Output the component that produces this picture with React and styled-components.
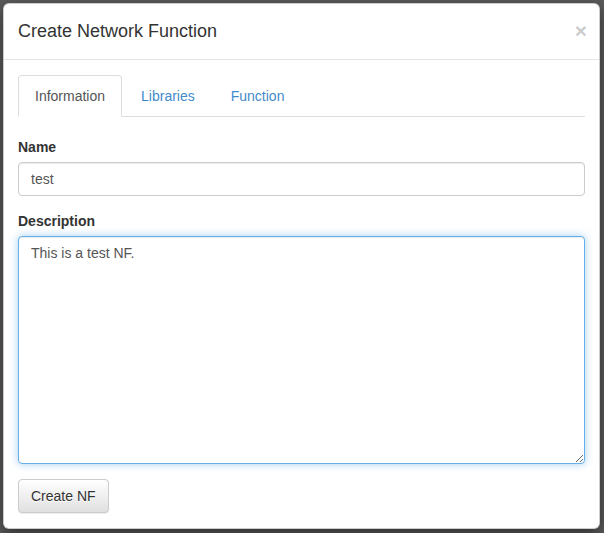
import React, { useEffect, useRef, useState } from 'react';
import styled, { createGlobalStyle, css } from 'styled-components';

const GlobalStyle = createGlobalStyle`
  html, body {
    margin: 0;
    padding: 0;
    background: #5b5b5b;
  }
  body {
    font-family: 'Liberation Sans', Arial, Helvetica, sans-serif;
    font-size: 14px;
    line-height: 1.42857;
    color: #333;
  }
  * {
    box-sizing: border-box;
  }
`;

const Backdrop = styled.div`
  width: 604px;
  height: 533px;
  padding: 3px;
  background: #5b5b5b;
  overflow: hidden;
`;

const Modal = styled.div`
  width: 597px;
  background: #fff;
  border: 1px solid rgba(0, 0, 0, 0.2);
  border-radius: 6px;
  box-shadow: 0 5px 15px rgba(0, 0, 0, 0.5);
`;

const Header = styled.div`
  display: flex;
  align-items: center;
  justify-content: space-between;
  padding: 15px 14px 14px;
  border-bottom: 1px solid #e5e5e5;
`;

const Title = styled.h4`
  margin: 0;
  font-size: 18px;
  font-weight: normal;
  line-height: 1.42857;
  color: #333;
`;

const Close = styled.button`
  margin: -3px -2px 0 0;
  padding: 0;
  border: 0;
  background: transparent;
  font-family: 'Liberation Sans', Arial, sans-serif;
  font-size: 21px;
  font-weight: bold;
  line-height: 1;
  color: #000;
  opacity: 0.2;
  cursor: pointer;
`;

const Body = styled.div`
  padding: 15px 14px 15px;
`;

const Tabs = styled.ul`
  display: flex;
  margin: 0;
  padding: 0;
  list-style: none;
  border-bottom: 1px solid #ddd;
`;

const Tab = styled.li`
  margin: 0 2px -1px 0;
  padding: 10px 16px;
  line-height: 20px;
  border: 1px solid transparent;
  border-radius: 4px 4px 0 0;
  color: #428bca;
  cursor: pointer;

  ${(p) =>
    p.$active &&
    css`
      color: #555;
      background: #fff;
      border-color: #ddd;
      border-bottom-color: transparent;
      cursor: default;
    `}
`;

const TabPane = styled.div`
  padding-top: 20.6px;
`;

const Group = styled.div`
  margin-bottom: 15px;
`;

const Label = styled.label`
  display: block;
  margin-bottom: 5px;
  font-weight: bold;
  line-height: 20px;
`;

const field = css`
  display: block;
  width: 100%;
  padding: 6px 12px;
  font-family: 'Liberation Sans', Arial, sans-serif;
  font-size: 14px;
  line-height: 20px;
  color: #555;
  background: #fff;
  border: 1px solid #ccc;
  border-radius: 4px;
  box-shadow: inset 0 1px 1px rgba(0, 0, 0, 0.075);
  outline: 0;

  &:focus {
    border-color: #66afe9;
    box-shadow: inset 0 1px 1px rgba(0, 0, 0, 0.075), 0 0 8px rgba(102, 175, 233, 0.6);
  }
`;

const Input = styled.input`
  ${field}
  height: 34px;
`;

const TextArea = styled.textarea`
  ${field}
  height: 228px;
  resize: vertical;
  caret-color: #333;
`;

const Button = styled.button`
  display: inline-block;
  padding: 6px 12px;
  font-family: 'Liberation Sans', Arial, sans-serif;
  font-size: 14px;
  line-height: 20px;
  color: #333;
  background-image: linear-gradient(to bottom, #fff 0, #e0e0e0 100%);
  border: 1px solid #ccc;
  border-radius: 4px;
  box-shadow: inset 0 1px 0 rgba(255, 255, 255, 0.15), 0 1px 1px rgba(0, 0, 0, 0.075);
  text-shadow: 0 1px 0 #fff;
  cursor: pointer;
`;

const tabs = ['Information', 'Libraries', 'Function'];

export default function App() {
  const [active, setActive] = useState(0);
  const [name, setName] = useState('test');
  const [desc, setDesc] = useState('This is a test NF.');
  const descRef = useRef(null);

  useEffect(() => {
    const el = descRef.current;
    if (el) {
      el.focus();
      el.setSelectionRange(el.value.length, el.value.length);
    }
  }, []);

  return (
    <>
      <GlobalStyle />
      <Backdrop>
        <Modal>
          <Header>
            <Title>Create Network Function</Title>
            <Close aria-label="Close">×</Close>
          </Header>
          <Body>
            <Tabs>
              {tabs.map((t, i) => (
                <Tab key={t} $active={i === active} onClick={() => setActive(i)}>
                  {t}
                </Tab>
              ))}
            </Tabs>
            <TabPane>
              <Group>
                <Label>Name</Label>
                <Input value={name} onChange={(e) => setName(e.target.value)} />
              </Group>
              <Group>
                <Label>Description</Label>
                <TextArea ref={descRef} value={desc} onChange={(e) => setDesc(e.target.value)} />
              </Group>
              <Button>Create NF</Button>
            </TabPane>
          </Body>
        </Modal>
      </Backdrop>
    </>
  );
}
